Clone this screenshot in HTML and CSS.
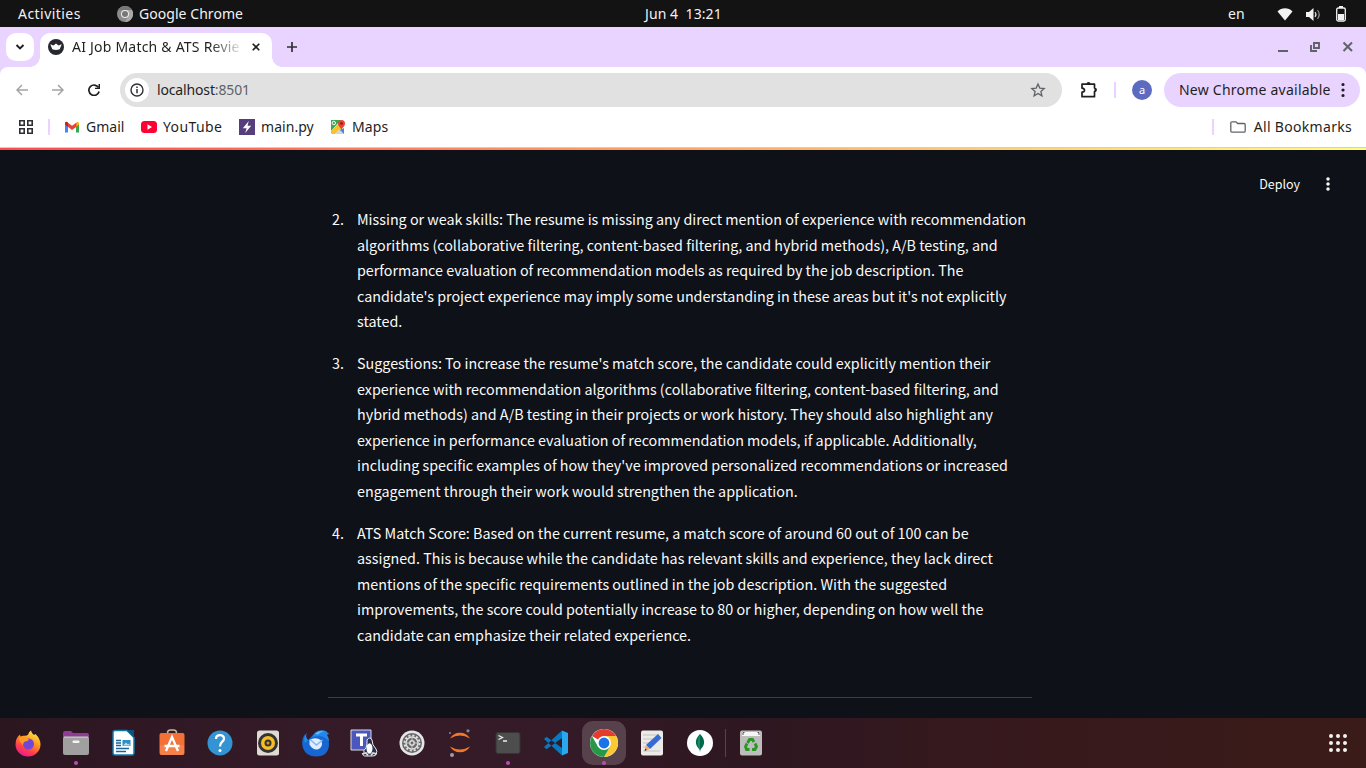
FILE: index.html
```html
<!DOCTYPE html>
<html lang="en">
<head>
<meta charset="utf-8">
<title>AI Job Match &amp; ATS Review</title>
<link rel="stylesheet" href="styles.css">
</head>
<body>
<header class="topbar">
  <span class="activities">Activities</span>
  <svg class="app-icon" width="16" height="16" viewBox="0 0 16 16"><circle cx="8" cy="8" r="8" fill="#8b8b8b"/><path d="M1 4a8 8 0 0 1 14 0L8 4Z" fill="#777"/><path d="M8 16a8 8 0 0 0 7-12H8l3.500 6Z" fill="#a8a8a8"/><circle cx="8" cy="8" r="4" fill="#eee"/><circle cx="8" cy="8" r="3" fill="#777"/></svg>
  <span class="app-name">Google Chrome</span>
  <span class="clock">Jun 4&nbsp; 13:21</span>
  <span class="lang">en</span>
  <svg class="status" width="74" height="20" viewBox="0 0 74 20"><path d="M1.500 7.500C5.500 3.200 12.500 3.200 16.500 7.500L9 16.500Z" fill="#f2f2f2"/><path d="M30 8h3l4.500-4v13L33 13h-3Z" fill="#f2f2f2"/><path d="M39 8q2 2.500 0 5" fill="none" stroke="#ddd" stroke-width="1.200"/><path d="M41.500 6q3.500 4.500 0 9" fill="none" stroke="#888" stroke-width="1.200"/><rect x="60.700" y="4" width="8.600" height="13" rx="1.500" fill="none" stroke="#f2f2f2" stroke-width="1.300"/><path d="M63 2h4v2h-4zM62 10h6v6h-6z" fill="#f2f2f2"/></svg>
</header>

<div class="tabstrip">
  <button class="tab-search"><svg width="10" height="10" viewBox="0 0 10 10"><path d="m1.500 3 3.500 3.500L8.500 3" fill="none" stroke="#1f1f1f" stroke-width="1.900"/></svg></button>
  <div class="tab">
    <svg width="16" height="16" viewBox="0 0 16 16"><circle cx="8" cy="8" r="8" fill="#262730"/><path d="m2.300 5.300 3.200 1.300L8 4.600l2.500 2 3.200-1.300-2 5q-3.700 1.400-7.400 0Z" fill="#fff"/></svg>
    <span class="tab-title">AI Job Match &amp; ATS Revie</span>
    <svg class="tab-close" width="8" height="8" viewBox="0 0 8 8"><path d="m.7.7 6.600 6.600m0-6.600L.7 7.300" stroke="#1f1f1f" stroke-width="1.600"/></svg>
  </div>
  <svg class="new-tab" width="10" height="10" viewBox="0 0 10 10"><path d="M5 0v10M0 5h10" stroke="#303034" stroke-width="1.700"/></svg>
  <svg class="window-controls" width="76" height="14" viewBox="0 0 76 14"><path d="M1 11h10" stroke="#5f6368" stroke-width="2"/><path d="M37 3h5v5h-5zM34 5v6h6" fill="none" stroke="#5f6368" stroke-width="1.900"/><path d="m66.500 2.500 8.500 8.500m0-8.500L66.500 11" stroke="#5f6368" stroke-width="2"/></svg>
</div>

<div class="chrome">
  <div class="toolbar">
    <svg class="nav" width="12" height="12" viewBox="0 0 12 12"><path d="M12 6H1M6 1 1 6l5 5" fill="none" stroke="#a4a4a4" stroke-width="1.500"/></svg>
    <svg class="nav" width="12" height="12" viewBox="0 0 12 12"><path d="M0 6h11M6 1l5 5-5 5" fill="none" stroke="#a4a4a4" stroke-width="1.500"/></svg>
    <svg class="nav" width="12" height="12" viewBox="0 0 12 12"><path d="M10.500 3.500a5.200 5.200 0 1 0 .6 4" fill="none" stroke="#1f1f1f" stroke-width="1.700"/><path d="M12 0v5H7V3.700h3.500V0Z" fill="#1f1f1f"/></svg>
    <div class="omnibox">
      <span class="site-info"><svg width="14" height="14" viewBox="0 0 14 14"><circle cx="7" cy="7" r="6" fill="none" stroke="#303034" stroke-width="1.400"/><path d="M7 6v4.200M7 3.600v1.500" stroke="#303034" stroke-width="1.500"/></svg></span>
      <span class="url">localhost<span class="port">:8501</span></span>
      <svg class="star" width="16" height="16" viewBox="0 0 16 16"><path d="m8 2 1.800 4.100 4.400.4-3.300 3 1 4.400L8 11.500l-3.900 2.400 1-4.400-3.300-3 4.400-.4Z" fill="none" stroke="#5f6368" stroke-width="1.300"/></svg>
    </div>
    <svg class="ext" width="18" height="18" viewBox="0 0 18 18"><path d="M2 3.200h12.500V7q1.500.2 1.500 1.800t-1.500 1.900v5H2v-4.500q2.500-.3 2.500-2T2 7.200Z" fill="none" stroke="#1f1f1f" stroke-width="1.700" stroke-linejoin="round"/><path d="M6.500 3a2 2 0 0 1 4 0ZM14.500 7a2 2 0 0 1 0 4Z" fill="#1f1f1f"/></svg>
    <i class="divider"></i>
    <span class="avatar">a</span>
    <div class="update"><span>New Chrome available</span><svg width="4" height="16" viewBox="0 0 4 16"><path d="M2 2.500h.01M2 8h.01M2 13.500h.01" stroke="#1f1f1f" stroke-width="3.200" stroke-linecap="round"/></svg></div>
  </div>
  <div class="bookmarks">
    <svg class="apps" width="14" height="14" viewBox="0 0 14 14"><path d="M.8.8h4.400v4.400H.8zM8.800.8h4.400v4.400H8.800zM.8 8.800h4.400v4.400H.8zM8.800 8.800h4.400v4.400H8.800z" fill="none" stroke="#303034" stroke-width="1.600"/></svg>
    <i class="divider"></i>
    <span class="bm gmail"><svg width="16" height="16" viewBox="0 0 16 16"><path d="M1 4v9.500h3V7Z" fill="#4285f4"/><path d="M15 4v9.500h-3V7Z" fill="#34a853"/><path d="M12 4.500 13 3q2-.8 2 1.500v1L12 8Z" fill="#fbbc04"/><path d="M1 5.500v-1Q1 2.200 3 3l5 3.700L12.500 3.500V7.700L8 11 1 5.500Z" fill="#ea4335"/><path d="M1 5.500v-1Q1 2.200 3 3l1 .8V8Z" fill="#c5221f"/></svg><span>Gmail</span></span>
    <span class="bm youtube"><svg width="16" height="16" viewBox="0 0 16 16"><rect y="2" width="16" height="12" rx="3.500" fill="#ff0033"/><path d="m6.500 5.300 4.500 2.700-4.500 2.700Z" fill="#fff"/></svg><span>YouTube</span></span>
    <span class="bm mainpy"><svg width="16" height="16" viewBox="0 0 16 16"><path d="M0 0h16v16H0z" fill="#563d7c"/><path d="M9.800 2 3.800 9.200h3.800L6.200 14l6-7.200H8.500Z" fill="#fff"/></svg><span>main.py</span></span>
    <span class="bm maps"><svg width="16" height="16" viewBox="0 0 16 16"><path d="M1 1h10L1 12Z" fill="#34a853"/><path d="M1 12 9 4l5 11-4.500-4L5 15H2q-1 0-1-1Z" fill="#fbc02d"/><path d="m5 15 4.500-4.500L14 15Z" fill="#cfd8dc"/><path d="m10 11 4-2v6Z" fill="#4285f4"/><circle cx="3.800" cy="4" r="1.700" fill="none" stroke="#fff"/><path d="M11.500 11C11 8.500 8 7.500 8 4.500a3.500 3.500 0 0 1 7 0c0 3-3 4-3.500 6.500Z" fill="#ea4335"/><circle cx="11.500" cy="4.500" r="1.300" fill="#8b1c13"/></svg><span>Maps</span></span>
    <i class="divider end"></i>
    <svg class="folder" width="16" height="12" viewBox="0 0 16 12"><path d="M.8 10V2Q.8.800 2 .8h4l1.700 1.700H14q1.200 0 1.200 1.200V10q0 1.200-1.200 1.200H2Q.8 11.200.8 10Z" fill="none" stroke="#5f6368" stroke-width="1.300"/></svg>
    <span class="all">All Bookmarks</span>
  </div>
</div>

<main class="app">
  <div class="decoration"></div>
  <div class="app-header"><span class="deploy">Deploy</span><svg width="4" height="14" viewBox="0 0 4 14"><path d="M2 2h.01M2 7h.01M2 12h.01" stroke="#fafafa" stroke-width="3.500" stroke-linecap="round"/></svg></div>
  <div class="content">
    <section class="item"><span class="num">2.</span><p>Missing or weak skills: The resume is missing any direct mention of experience with recommendation<br>algorithms (collaborative filtering, content-based filtering, and hybrid methods), A/B testing, and<br>performance evaluation of recommendation models as required by the job description. The<br>candidate's project experience may imply some understanding in these areas but it's not explicitly<br>stated.</p></section>
    <section class="item"><span class="num">3.</span><p>Suggestions: To increase the resume's match score, the candidate could explicitly mention their<br>experience with recommendation algorithms (collaborative filtering, content-based filtering, and<br>hybrid methods) and A/B testing in their projects or work history. They should also highlight any<br>experience in performance evaluation of recommendation models, if applicable. Additionally,<br>including specific examples of how they've improved personalized recommendations or increased<br>engagement through their work would strengthen the application.</p></section>
    <section class="item"><span class="num">4.</span><p>ATS Match Score: Based on the current resume, a match score of around 60 out of 100 can be<br>assigned. This is because while the candidate has relevant skills and experience, they lack direct<br>mentions of the specific requirements outlined in the job description. With the suggested<br>improvements, the score could potentially increase to 80 or higher, depending on how well the<br>candidate can emphasize their related experience.</p></section>
    <div class="rule"></div>
  </div>
</main>

<footer class="dock">
  <span class="slot"><svg width="28" height="28" viewBox="0 0 28 28"><defs><linearGradient id="ff" x1=".8" y1="0" x2=".3" y2="1"><stop offset="0" stop-color="#fff34f"/><stop offset=".4" stop-color="#ff9a1f"/><stop offset=".75" stop-color="#ff3a4e"/><stop offset="1" stop-color="#f0169a"/></linearGradient></defs><path d="M17 1.500q.5 3 3 4.500l1.500-1q5 5 5 10.500a12.500 12 0 0 1-25 0Q1.500 9 6 5.500q0 1.500.7 2 1-.8 3.300-.7 2.800.2 4-1 .8-3 3-4.300Z" fill="url(#ff)"/><circle cx="14.500" cy="15" r="5.500" fill="#7247d6"/><path d="M5 9q4-2 7 0l3 1.500q-1 2-4 2-2 .8-2 3.500-3-2-4-7Z" fill="#ff9a24"/></svg></span>
  <span class="slot running"><svg width="28" height="28" viewBox="0 0 28 28"><path d="M1 7V4q0-2 2-2h6l2 2h14q2 0 2 2v4H1Z" fill="#903b94"/><rect x="1" y="7.500" width="26" height="18.500" rx="2" fill="#a0a0a0"/><path d="M2 8.200h24" stroke="#ccc"/><rect x="10.500" y="11.500" width="7" height="2.500" rx="1" fill="#f4f4f4"/></svg></span>
  <span class="slot"><svg width="28" height="28" viewBox="0 0 28 28"><path d="M5 1.500h12l7 7V24q0 2-2 2H5q-2 0-2-2V3.500q0-2 2-2Z" fill="#fff" stroke="#1676a8" stroke-width="1.500"/><path d="M17 1h7v7.500Z" fill="#0c5479"/><path d="M6 11.500h5M6 14h5M6 16.500h5M6 19.500h13M6 22.500h10" stroke="#18669a" stroke-width="1.300"/><path d="M12.500 11h8v6h-8z" fill="#2d8fc3"/><path d="m13 16.500 3-3 2 2 1-1 1 2Z" fill="#b9e2f5"/></svg></span>
  <span class="slot"><svg width="28" height="28" viewBox="0 0 28 28"><path d="M9.500 6V4a3 3 0 0 1 3-3h3a3 3 0 0 1 3 3v2" fill="none" stroke="#c9b69b" stroke-width="1.500"/><rect x="1.500" y="4" width="25" height="22" rx="2" fill="#f37036"/><path d="M2 16h24v8q0 2-2 2H4q-2 0-2-2Z" fill="#f58049"/><path d="m8 22 6-14 6 14M6.500 17h15" fill="none" stroke="#fff" stroke-width="2.300"/></svg></span>
  <span class="slot"><svg width="28" height="28" viewBox="0 0 28 28"><circle cx="14" cy="14" r="12.500" fill="#3494d3"/><path d="M10 10c0-5 8-5 8-.5 0 3.500-4 3-4 8" fill="none" stroke="#fff" stroke-width="2.300"/><circle cx="14" cy="21.500" r="1.500" fill="#fff"/></svg></span>
  <span class="slot"><svg width="28" height="28" viewBox="0 0 28 28"><rect x="3" y="1.500" width="22" height="25" rx="2.500" fill="#e0dbd2"/><circle cx="14" cy="14" r="10" fill="#333"/><circle cx="14" cy="14" r="7" fill="#f5bd28"/><circle cx="14" cy="14" r="3.500" fill="#333"/><circle cx="14" cy="14" r="1.500" fill="#d49b18"/></svg></span>
  <span class="slot"><svg width="28" height="28" viewBox="0 0 28 28"><path d="M3 5Q-1.500 11 1 19q3 8.500 13 8.500 13 0 13-13 0-5-2.500-8L22 4 11 6 6 11Q2.500 9 3 5Z" fill="#1767d2"/><path d="M5 3.500Q3 8 6 11l-3 3Q.5 9 5 3.500Z" fill="#238ce8"/><path d="M10 8.500Q12 1.500 20 1.200q4.500.1 6 3l1.500.6-2.500 1q2 3 2 7-4-6-10-5.500Q13 7 10 8.500Z" fill="#2289ea"/><path d="M13 5q4-4 9-2.500-4 .5-6 3Z" fill="#5cc1fa"/><path d="M7.500 11q6-3.500 12 .5 2 7-4 9-5 .5-8-5Z" fill="#dfedff"/><path d="m8 10.500 6.500 5.500 6-5" fill="none" stroke="#82b5f4" stroke-width="1.500"/></svg></span>
  <span class="slot"><svg width="28" height="28" viewBox="0 0 28 28"><path d="M1 1h20v20H1z" fill="#4b57bd" stroke="#ddd"/><path d="M6 6h11M11.500 6v11" stroke="#fff" stroke-width="3"/><path d="M17 11q3-4 5 0 0 5 4 9 2 3-.5 5 1 2-3 2h-8q-3-1-.5-3-1-3 2-5 1.500-4 1-8Z" fill="#27304d" stroke="#eee"/><ellipse cx="19.500" cy="19.500" rx="3" ry="5.200" fill="#fff"/><path d="m12 25 4-1 2 2.500M21 26.500l2-2.500 4 1" fill="none" stroke="#ddd" stroke-width="1.800"/></svg></span>
  <span class="slot"><svg width="28" height="28" viewBox="0 0 28 28"><circle cx="14" cy="14" r="12.500" fill="#e6e6e6"/><circle cx="14" cy="14" r="10" fill="#686868"/><circle cx="14" cy="14" r="7.500" fill="none" stroke="#ddd" stroke-width="2" stroke-dasharray="2.200 1.727"/><circle cx="14" cy="14" r="6" fill="none" stroke="#ddd" stroke-width="1.500"/><circle cx="14" cy="14" r="2.200" fill="none" stroke="#ddd" stroke-width="1.500"/><path d="M14 8v4M14 16v4M8 14h4M16 14h4" stroke="#ccc"/></svg></span>
  <span class="slot"><svg width="28" height="28" viewBox="0 0 28 28"><path d="M4 9.500a11.500 11.500 0 0 1 20 0q-10-6-20 0ZM4 17.500a11.500 11.500 0 0 0 20 0q-10 6-20 0Z" fill="#f37726"/><circle cx="22" cy="1.800" r="1.600" fill="#8a8588"/><circle cx="4" cy="4" r="1" fill="#8a8588"/><circle cx="6" cy="26" r="2" fill="#a19da0"/></svg></span>
  <span class="slot running"><svg width="28" height="28" viewBox="0 0 28 28"><rect x="2" y="3.500" width="24" height="21" rx="2" fill="#4d4d4d" stroke="#353535"/><path d="m4.500 6.500 4 2-4 2M9 12h4" fill="none" stroke="#eee" stroke-width="1.300"/></svg></span>
  <span class="slot"><svg width="28" height="28" viewBox="0 0 28 28"><path d="m20 1.500 6 2.500v20l-6 2.500Z" fill="#28a8ef"/><path d="M20 1.500 2 18l2.500 2.200L20 9ZM20 26.500 2 10l2.500-2.200L20 19Z" fill="#0879c0"/></svg></span>
  <span class="slot active running"><svg width="28" height="28" viewBox="0 0 28 28"><circle cx="14" cy="14" r="14" fill="#fff"/><path d="M14 14 1.900 7a14 14 0 0 1 24.200 0Z" fill="#e33b2e"/><path d="M14 7h12.100A14 14 0 0 1 14 28l6-10.500Z" fill="#fcc934"/><path d="M1.900 7A14 14 0 0 0 14 28l6.100-10.500L14 14 8 17.500Z" fill="#279847"/><circle cx="14" cy="14" r="7" fill="#fff"/><circle cx="14" cy="14" r="5.400" fill="#1a73e8"/></svg></span>
  <span class="slot"><svg width="28" height="28" viewBox="0 0 28 28"><rect x="3" y="1.500" width="22" height="25" rx="2" fill="#ecebe8"/><path d="M5 6h16M5 10h12M5 14h8M5 18h7M5 22h17" stroke="#c3c3bf"/><path d="m20 5 3.500 4L12 20l-4-4Z" fill="#376cd5"/><path d="m8 16 4 4-5.500 2Z" fill="#efae72"/><path d="m6.500 22 .8-2.500 1.500 1.500Z" fill="#333"/></svg></span>
  <span class="slot"><svg width="28" height="28" viewBox="0 0 28 28"><circle cx="14" cy="14" r="13" fill="#fff"/><path d="M14 5q-8 8-.5 15.500l.5 2.500.5-2.500Q22 13 14 5Z" fill="#00684a"/><path d="M14 5v16Q9 14 14 5Z" fill="#168e5b"/></svg></span>
  <i class="dock-divider"></i>
  <span class="slot"><svg width="28" height="28" viewBox="0 0 28 28"><rect x="3" y="1.500" width="22" height="25" rx="2" fill="#bdbdbb"/><path d="M5 3h18v4H5z" fill="#f5f5f5"/><path d="M6 6V3.500h1.500M22 6V3.500h-1.500" fill="none" stroke="#555"/><path d="m10.500 14 2-3.500h3l1.500 2.500M18 14.500l1.500 3-1.500 3h-3M12.500 20.500h-3L8.500 17.500l1.500-3" fill="none" stroke="#2b9626" stroke-width="2.800"/></svg></span>
  <svg class="grid" width="18" height="18" viewBox="0 0 18 18"><path d="M2 2h.01M9 2h.01M16 2h.01M2 9h.01M9 9h.01M16 9h.01M2 16h.01M9 16h.01M16 16h.01" stroke="#f4f2f0" stroke-width="4" stroke-linecap="round"/></svg>
</footer>
</body>
</html>
```

FILE: styles.css
```css
* { box-sizing: border-box; }
body {
  margin: 0;
  width: 1366px;
  height: 768px;
  overflow: hidden;
  display: flex;
  flex-direction: column;
  background: #0e1117;
  font: 14px/20px "Noto Sans", sans-serif;
  color: #1f1f1f;
  white-space: nowrap;
}
svg { display: block; flex: none; }

.topbar { height: 27px; flex: none; display: flex; align-items: center; background: #131313; color: #f2f2f2; }
.activities { width: 99px; padding-left: 18px; letter-spacing: .45px; }
.app-icon { margin-left: 18px; }
.app-name { margin-left: 6px; width: 506px; letter-spacing: .05px; }
.clock { width: 583px; letter-spacing: .08px; }
.lang { width: 48px; }

.tabstrip { height: 40px; flex: none; display: flex; align-items: center; background: #e9d3ff; }
.tab-search { width: 28px; height: 28px; margin-left: 6px; padding: 0; border: 0; border-radius: 10px; background: #fff; display: grid; place-items: center; }
.tab { position: relative; width: 232px; height: 34px; align-self: flex-end; margin-left: 6px; padding: 0 12px 6px 8px; display: flex; align-items: center; background: #fff; border-radius: 10px 10px 0 0; }
.tab::before, .tab::after { content: ""; position: absolute; bottom: 0; width: 10px; height: 10px; }
.tab::before { left: -10px; background: radial-gradient(circle at 0 0, transparent 9.500px, #fff 10px); }
.tab::after { right: -10px; background: radial-gradient(circle at 100% 0, transparent 9.500px, #fff 10px); }
.tab-title { margin-left: 8px; width: 167px; letter-spacing: .22px; color: transparent; background: linear-gradient(90deg, #1f1f1f 138px, rgba(31, 31, 31, .15) 167px); -webkit-background-clip: text; background-clip: text; }
.tab-close { margin-left: 13px; }
.new-tab { margin-left: 15px; }
.window-controls { margin-left: auto; margin-right: 13px; }

.chrome { height: 81px; flex: none; background: #e9d3ff; border-bottom: 1px solid #cfcfcf; }
.toolbar { height: 46px; display: flex; align-items: center; background: #fff; border-radius: 8px 8px 0 0; padding-left: 16px; }
.nav { margin-right: 24px; }
.nav + .nav + .nav { margin-right: 20px; }
.omnibox { width: 942px; height: 34px; display: flex; align-items: center; border-radius: 17px; background: #e1e1e1; }
.site-info { width: 24px; height: 24px; margin-left: 5px; border-radius: 50%; background: #fff; display: grid; place-items: center; }
.url { margin-left: 8px; letter-spacing: -.15px; }
.port { color: #5f6368; }
.star { margin-left: auto; margin-right: 16px; }
.ext { margin-left: 18px; }
.divider { width: 2px; height: 16px; background: #e9d3ff; }
.ext + .divider { margin-left: 16px; }
.avatar { width: 20px; height: 20px; margin-left: 16px; border-radius: 50%; background: #5c6bc0; color: #fff; font-size: 11px; line-height: 19px; text-align: center; }
.update { width: 196px; height: 34px; margin-left: 12px; padding: 0 15px; display: flex; align-items: center; border-radius: 17px; background: #e9d3ff; letter-spacing: .23px; }
.update svg { margin-left: auto; }
.bookmarks { height: 34px; display: flex; align-items: center; background: #fff; padding: 0 14px 6px 19px; }
.apps { margin-right: 15px; }
.bm { display: flex; align-items: center; gap: 6px; }
.gmail { width: 77px; margin-left: 14px; }
.youtube { width: 98px; letter-spacing: .4px; }
.mainpy { width: 91px; letter-spacing: .05px; }
.maps { letter-spacing: .15px; }
.end { margin-left: auto; }
.folder { margin-left: 16px; margin-right: 8px; }
.all { letter-spacing: .3px; }

.app { height: 570px; flex: none; background: #0e1117; color: #fafafa; font-family: "Noto Sans CJK SC", sans-serif; }
.decoration { height: 2px; background: linear-gradient(90deg, #ff4b4b, #fffd80); }
.app-header { height: 56.100px; padding: 12px 36px 0 0; display: flex; justify-content: flex-end; align-items: center; font-size: 12.500px; }
.deploy { margin-right: 26px; }
.content { width: 704px; margin-left: 328px; font-size: 14.320px; line-height: 25.600px; }
.item { display: flex; margin-bottom: 16px; }
.num { width: 29px; padding-left: 4px; }
.item p { margin: 0; }
.rule { height: 1px; margin-top: 49px; background: #3b3d45; }

.dock { height: 50px; flex: none; display: flex; align-items: center; padding-left: 4px; background: linear-gradient(90deg, #2b1620, #351b28 25%, #351b28 38%, #2e1721 55%, #37191d 75%, #3a1b18); }
.slot { position: relative; width: 48px; height: 44px; display: grid; place-items: center; }
.active { width: 44px; margin: 0 2px; border-radius: 11px; background: #57424c; }
.running::after { content: ""; position: absolute; left: calc(50% - 2px); bottom: 0; width: 4px; height: 4px; border-radius: 50%; background: #b84eb5; }
.dock-divider { width: 1px; height: 28px; margin-left: 1px; background: #5b4249; }
.dock-divider + .slot { margin-left: 1px; }
.grid { margin-left: auto; margin-right: 19px; }
```
